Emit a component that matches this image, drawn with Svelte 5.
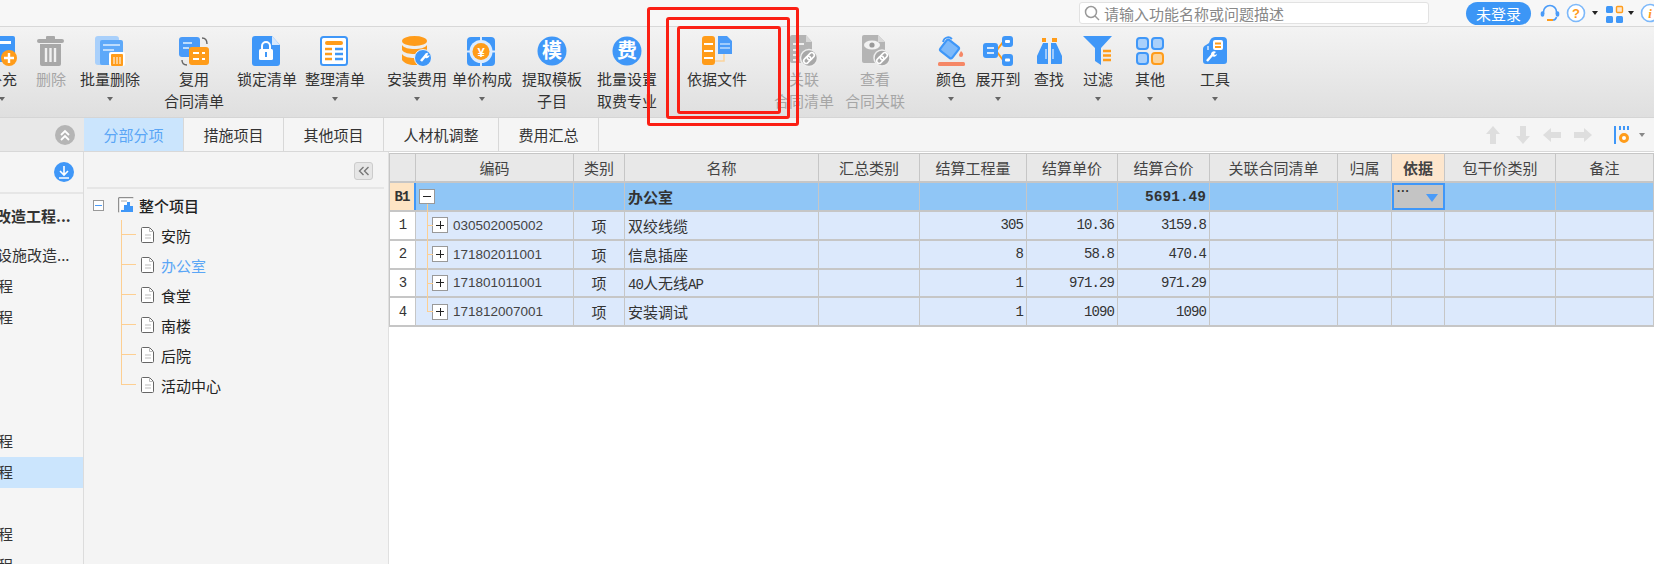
<script>
    const blue = '#3f97f8'

    const tools = [
        {w: 70, icon: 'add', lines: ['补充'], arrow: true},
        {w: 28, icon: 'trash', lines: ['删除'], off: true},
        {w: 90, icon: 'batchdel', lines: ['批量删除'], arrow: true},
        {w: 78, icon: 'reuse', lines: ['复用', '合同清单']},
        {w: 68, icon: 'lock', lines: ['锁定清单']},
        {w: 68, icon: 'sort', lines: ['整理清单'], arrow: true},
        {w: 96, icon: 'db', lines: ['安装费用'], arrow: true},
        {w: 34, icon: 'price', lines: ['单价构成'], arrow: true},
        {w: 106, icon: 'mo', lines: ['提取模板', '子目']},
        {w: 44, icon: 'fei', lines: ['批量设置', '取费专业']},
        {w: 136, icon: 'basis', lines: ['依据文件']},
        {w: 38, icon: 'link', lines: ['关联', '合同清单'], off: true},
        {w: 104, icon: 'view', lines: ['查看', '合同关联'], off: true},
        {w: 48, icon: 'color', lines: ['颜色'], arrow: true},
        {w: 46, icon: 'expand', lines: ['展开到'], arrow: true},
        {w: 56, icon: 'find', lines: ['查找']},
        {w: 42, icon: 'filter', lines: ['过滤'], arrow: true},
        {w: 62, icon: 'other', lines: ['其他'], arrow: true},
        {w: 68, icon: 'tool', lines: ['工具'], arrow: true}
    ]

    const tabs = ['分部分项', '措施项目', '其他项目', '人材机调整', '费用汇总']

    const sideRows = [
        {text: '改造工程...', kind: 'bold'},
        {text: '设施改造...', kind: 'mid'},
        {text: '程'}, {text: '程'},
        {text: ''}, {text: ''}, {text: ''},
        {text: '程'},
        {text: '程', sel: true},
        {text: ''},
        {text: '程'}, {text: '程'}
    ]

    const treeItems = ['安防', '办公室', '食堂', '南楼', '后院', '活动中心']

    const heads = ['', '编码', '类别', '名称', '汇总类别', '结算工程量', '结算单价', '结算合价', '关联合同清单', '归属', '依据', '包干价类别', '备注']

    const rows = [
        {n: 1, code: '030502005002', name: '双绞线缆', qty: '305', unit: '10.36', sum: '3159.8'},
        {n: 2, code: '171802011001', name: '信息插座', qty: '8', unit: '58.8', sum: '470.4'},
        {n: 3, code: '171801011001', name: '40人无线AP', qty: '1', unit: '971.29', sum: '971.29'},
        {n: 4, code: '171812007001', name: '安装调试', qty: '1', unit: '1090', sum: '1090'}
    ]
</script>

<div class="page">
    <header class="topbar">
        <div class="search">
            <svg width="16" height="16" viewBox="0 0 16 16" fill="none" stroke="#999" stroke-width="1.5"><circle cx="7" cy="7" r="5.5"/><path d="M11 11l4 4"/></svg>
            <span>请输入功能名称或问题描述</span>
        </div>
        <button class="login">未登录</button>
        <svg class="ti headset" width="20" height="20" viewBox="0 0 20 20" fill="none" stroke="#4a9bf8" stroke-width="1.600"><path d="M3.500 11V9a6.500 6.500 0 0 1 13 0v2"/><rect x="1.500" y="9" width="2" height="4" rx="1" fill="#4a9bf8"/><rect x="16.500" y="9" width="2" height="4" rx="1" fill="#4a9bf8"/><path d="M7 17h6" stroke="#ff9c1a" stroke-width="2"/><path d="M13 17c2 0 3-1 3.500-3"/></svg>
        <svg class="ti help" width="20" height="20" viewBox="0 0 20 20" fill="#fff" stroke="#7cb8fa" stroke-width="1.600"><circle cx="10" cy="10" r="8.500"/><text x="10" y="15" text-anchor="middle" font-size="13" font-weight="bold" fill="#ff9c1a" stroke="none" font-family="Liberation Sans">?</text></svg>
        <i class="mini help-c"></i>
        <svg class="ti apps" width="18" height="20" viewBox="0 0 18 20"><rect x="0" y="3" width="7" height="7" rx="1.500" fill={blue}/><rect x="10.500" y="3.500" width="6" height="6" rx="1" fill="#fde6cd" stroke="#ff9c1a" stroke-width="1.400"/><rect x="0" y="13" width="7" height="7" rx="1.500" fill={blue}/><rect x="10" y="13" width="7" height="7" rx="1.500" fill={blue}/></svg>
        <i class="mini apps-c"></i>
        <svg class="ti help" width="20" height="20" viewBox="0 0 20 20" fill="#fff" stroke="#7cb8fa" stroke-width="1.600"><circle cx="10" cy="10" r="8.500"/><text x="10" y="15" text-anchor="middle" font-size="13" font-weight="bold" font-style="italic" fill="#ff9c1a" stroke="none" font-family="Liberation Serif">i</text></svg>
    </header>

    <div class="toolbar">
        {#each tools as t}
            <div class="tool" class:off={t.off} style="width:{t.w}px">
                <svg class="ico" width="30" height="30" viewBox="0 0 30 30">
                    {#if t.icon === 'add'}
                        <rect x="0" y="0" width="28" height="26" rx="2" fill={blue}/><rect x="0" y="5" width="24" height="3" fill="#fff"/>
                        <circle cx="22" cy="22" r="8" fill="#ff9c1a"/><path d="M22 17v10M17 22h10" stroke="#fff" stroke-width="2.4"/>
                    {:else if t.icon === 'trash'}
                        <rect x="1" y="3" width="27" height="4" rx="2" fill="#a8a8a8"/><rect x="10" y="0" width="9" height="4" rx="1" fill="#a8a8a8"/>
                        <path d="M4 8h21v20a2 2 0 0 1-2 2H6a2 2 0 0 1-2-2z" fill="#a8a8a8"/>
                        <path d="M10 12v14M14.500 12v14M19 12v14" stroke="#f0f0f0" stroke-width="2.400"/>
                    {:else if t.icon === 'batchdel'}
                        <rect x="0" y="0" width="24" height="29" rx="3" fill="#a9d0fb"/><rect x="5" y="4" width="23" height="25" rx="2" fill="#5ea9f9"/>
                        <path d="M8 9h17M8 14h11" stroke="#bcdcfd" stroke-width="2"/>
                        <rect x="14" y="16" width="16" height="14" rx="2" fill="#fff"/><rect x="16" y="18" width="12" height="12" rx="1" fill="#ff9c1a"/><path d="M19 21v7M22 21v7M25 21v7" stroke="#fff"/>
                    {:else if t.icon === 'reuse'}
                        <rect x="0" y="1" width="21" height="20" rx="3" fill="#4a9bf8"/><path d="M4 7h9M4 12h6" stroke="#bcdcfd" stroke-width="2"/>
                        <rect x="10" y="11" width="20" height="18" rx="3" fill="#ff9c1a"/><path d="M14 17h6M23 17h3M14 23h6M23 23h3" stroke="#fff" stroke-width="2"/>
                        <path d="M23 2c3 0 5 2 5 6M3 24c0 3 2 5 5 5" stroke="#666" stroke-width="1.400" fill="none"/>
                    {:else if t.icon === 'lock'}
                        <path d="M3 0h17l8 9v18a3 3 0 0 1-3 3H3a3 3 0 0 1-3-3V3a3 3 0 0 1 3-3z" fill={blue}/><path d="M20 0l8 9h-8z" fill="#d6e8fd"/>
                        <rect x="7" y="13" width="14" height="11" rx="1.500" fill="#fff"/><path d="M10 13V10a4 4 0 0 1 8 0v3" fill="none" stroke="#fff" stroke-width="2"/><rect x="13" y="16" width="2" height="5" fill={blue}/>
                    {:else if t.icon === 'sort'}
                        <rect x="1" y="1" width="26" height="28" rx="2.500" fill="#fff" stroke={blue} stroke-width="2"/><rect x="5" y="5" width="18" height="4" rx="2" fill="#ff9c1a"/>
                        <path d="M5 13h7M5 18h7M5 23h7" stroke="#ff9c1a" stroke-width="2.400"/><path d="M15 13h8M15 18h8M15 23h8" stroke={blue} stroke-width="2.400"/>
                    {:else if t.icon === 'db'}
                        <ellipse cx="12.500" cy="5" rx="12.500" ry="5" fill="#ff9c1a"/>
                        <path d="M0 9c2 3 7 4 12.500 4S23 12 25 9v5c-2 3-7 4-12.500 4S2 17 0 14z" fill="#ff9c1a"/>
                        <path d="M0 18c2 3 7 4 12.500 4S23 21 25 18v6c-2 3-7 5-12.500 5S2 27 0 24z" fill="#ff9c1a"/>
                        <circle cx="21" cy="22" r="8.500" fill={blue} stroke="#f3f3f3"/><path d="M25 18l-6 7" stroke="#fff" stroke-width="2.600"/><path d="M22.500 20a3 3 0 0 1 4-3l-2 2 1 1 2-1a3 3 0 0 1-4 3z" fill="#fff"/>
                    {:else if t.icon === 'price'}
                        <rect x="0" y="1" width="28" height="29" rx="4" fill={blue}/><path d="M14 1v6M14 24v6M0 15.500h6M22 15.500h6" stroke="#dcecff" stroke-width="2"/>
                        <circle cx="14" cy="15.500" r="11.500" fill="#dcecff"/><circle cx="14" cy="15.500" r="8.500" fill="#ff9c1a"/><text x="14" y="20.500" text-anchor="middle" font-size="13" font-weight="bold" fill="#fff" font-family="Liberation Sans">¥</text>
                    {:else if t.icon === 'mo' || t.icon === 'fei'}
                        <circle cx="15" cy="15" r="14.500" fill={blue}/><text x="15" y="22" text-anchor="middle" font-size="20" font-weight="bold" fill="#fff" font-family="Noto Sans CJK SC">{t.icon === 'mo' ? '模' : '费'}</text>
                    {:else if t.icon === 'basis'}
                        <rect x="0" y="0" width="13" height="29" rx="3" fill="#ff9c1a"/><path d="M2 8h9M2 15h9M2 22h9" stroke="#fff" stroke-width="2"/>
                        <path d="M13 25h9v-7" stroke="#fbd49c" stroke-width="1.500" fill="none"/>
                        <path d="M16 0h9l5 5v13H16z" fill="#4a9bf8"/><path d="M18 8h10M18 12h10" stroke="#bcdcfd" stroke-width="1.500"/>
                    {:else if t.icon === 'link'}
                        <path d="M3 -1h14l6 7v21H3a2 2 0 0 1-2-2V1a2 2 0 0 1 2-2z" fill="#b4b4b4"/><path d="M17 -1l6 7h-6z" fill="#d8d8d8"/>
                        <path d="M4 8h11M4 14h3M4 19h3M4 24h3" stroke="#eee" stroke-width="2"/>
                        <circle cx="20" cy="22" r="8.500" fill="#a8a8a8" stroke="#eee" stroke-width="1.500"/>
                        <g transform="rotate(-45 20 22)" fill="none" stroke="#fff" stroke-width="1.600"><rect x="13.500" y="19.500" width="8" height="5" rx="2.500"/><rect x="18.500" y="19.500" width="8" height="5" rx="2.500"/></g>
                    {:else if t.icon === 'view'}
                        <path d="M4 -1h14l7 7v21H4a2 2 0 0 1-2-2V1a2 2 0 0 1 2-2z" fill="#b4b4b4"/><path d="M18 -1l7 7h-7z" fill="#d8d8d8"/>
                        <ellipse cx="12" cy="9" rx="8" ry="4.500" fill="#f2f2f2"/><circle cx="12" cy="9" r="2.600" fill="#999"/>
                        <circle cx="22" cy="22" r="8" fill="#a8a8a8" stroke="#eee" stroke-width="1.500"/>
                        <g transform="rotate(-45 22 22)" fill="none" stroke="#fff" stroke-width="1.600"><rect x="15.500" y="19.500" width="8" height="5" rx="2.500"/><rect x="20.500" y="19.500" width="8" height="5" rx="2.500"/></g>
                    {:else if t.icon === 'color'}
                        <path d="M7 6C8 1 13 0 16 3" fill="none" stroke={blue} stroke-width="1.800"/>
                        <rect x="6" y="6" width="15" height="14" rx="2" transform="rotate(38 13.500 13)" fill="#7db9fa" stroke={blue} stroke-width="2.200"/>
                        <path d="M25 15c2 2 2.500 3 2 4a2 2 0 0 1-4 0c0-1 1-2 2-4z" fill="#f58766"/><rect x="2" y="26" width="27" height="4" rx="1.500" fill="#f58766"/>
                    {:else if t.icon === 'expand'}
                        <path d="M14 14l6-8M14 16l6 8" stroke="#ff9c1a" stroke-width="2"/>
                        <rect x="0" y="7" width="15" height="15" rx="3" fill={blue}/><path d="M4 12h7M4 17h7" stroke="#d6e8fd" stroke-width="1.800"/>
                        <rect x="19" y="0" width="11" height="11" rx="3" fill={blue}/><rect x="22" y="4" width="5" height="3" rx="1" fill="#fff"/>
                        <rect x="19" y="18" width="11" height="12" rx="3" fill={blue}/><rect x="22" y="22.500" width="5" height="3" rx="1" fill="#fff"/>
                    {:else if t.icon === 'find'}
                        <path d="M9 7h5v21H4a1 1 0 0 1-1-1v-7z" fill={blue}/><path d="M17 7h5l6 13v7a1 1 0 0 1-1 1H17z" fill={blue}/>
                        <path d="M12 13v10M19 13v10" stroke="#dcecff" stroke-width="1.200"/>
                        <rect x="8" y="2" width="4" height="4" fill="#ff9c1a"/><rect x="18" y="2" width="5" height="4" fill="#ff9c1a"/>
                    {:else if t.icon === 'filter'}
                        <path d="M0 0h29L18 12v17l-6-4V12z" fill={blue}/><path d="M20 15h8M20 19.500h8M20 24h8" stroke="#ff9c1a" stroke-width="2.400"/>
                    {:else if t.icon === 'other'}
                        <rect x="2" y="2" width="11" height="11" rx="3" fill="#a9d0fb" stroke={blue} stroke-width="2"/><rect x="17" y="2" width="11" height="11" rx="3" fill="#a9d0fb" stroke={blue} stroke-width="2"/>
                        <rect x="2" y="17" width="11" height="11" rx="3" fill="#a9d0fb" stroke={blue} stroke-width="2"/><rect x="17" y="17" width="11" height="11" rx="3" fill="#fbd49c" stroke="#ff9c1a" stroke-width="2"/>
                    {:else if t.icon === 'tool'}
                        <path d="M15 1h8a4 4 0 0 1 4 4v20a3 3 0 0 1-3 3H6a3 3 0 0 1-3-3V13c0-2 1-3 3-4l3-2c1-4 3-6 6-6z" fill={blue}/>
                        <path d="M8 10v4" stroke="#fff" stroke-width="1.200"/>
                        <rect x="13" y="4" width="10" height="10" rx="2" fill="#fff"/><path d="M15 7.500h6M15 11h6" stroke="#ff9c1a" stroke-width="2"/>
                        <path d="M7 25l6-7" stroke="#fff" stroke-width="2.400"/><path d="M11 18a3 3 0 0 1 5-2l-2 2 1 1 2-1a3 3 0 0 1-5 2z" fill="#fff"/>
                    {/if}
                </svg>
                {#each t.lines as line}
                    <span class="label">{line}</span>
                {/each}
                {#if t.arrow}<i class="caret"></i>{/if}
            </div>
        {/each}
    </div>

    <div class="tabbar">
        <div class="side-head">
            <span class="round grey">
                <svg width="12" height="12" viewBox="0 0 12 12" fill="none" stroke="#fff" stroke-width="1.800"><path d="M2 6l4-4 4 4M2 11l4-4 4 4"/></svg>
            </span>
        </div>
        {#each tabs as tab, i}
            <div class="tab" class:active={i === 0} class:wide={i === 3}>{tab}</div>
        {/each}
        <div class="tab-tools">
            <svg width="16" height="20" viewBox="0 0 16 20" fill="#dedede"><path d="M8 1l7 8h-4v10H5V9H1z"/></svg>
            <svg class="down" width="16" height="20" viewBox="0 0 16 20" fill="#dedede"><path d="M8 19L1 11h4V1h6v10h4z"/></svg>
            <svg class="side-arrow" width="20" height="16" viewBox="0 0 20 16" fill="#dedede"><path d="M1 8l8-7v4h10v6H9v4z"/></svg>
            <svg class="side-arrow" width="20" height="16" viewBox="0 0 20 16" fill="#dedede"><path d="M19 8l-8-7v4H1v6h10v4z"/></svg>
            <svg class="gear" width="18" height="20" viewBox="0 0 18 20"><path d="M2 1v18" stroke={blue} stroke-width="2"/><path d="M7 1v4M11 1v4M15 1v4" stroke={blue} stroke-width="2"/><circle cx="11" cy="13" r="3.500" fill="#fff" stroke="#ff9c1a" stroke-width="3"/></svg>
            <i class="mini grey"></i>
        </div>
    </div>

    <div class="main">
        <aside class="side">
            <div class="side-top">
                <span class="round">
                    <svg width="14" height="14" viewBox="0 0 14 14" fill="none" stroke="#fff" stroke-width="1.600"><path d="M7 1v8M3 6l4 4 4-4M2 13h10"/></svg>
                </span>
            </div>
            <div class="side-list">
                {#each sideRows as r}
                    <div class="side-row {r.kind || ''}" class:sel={r.sel}><span>{r.text}</span></div>
                {/each}
            </div>
        </aside>

        <section class="tree">
            <div class="tree-top">
                <span class="collapse">
                    <svg width="12" height="10" viewBox="0 0 12 10" fill="none" stroke="#777" stroke-width="1.400"><path d="M5.500 1L1.500 5l4 4M10.500 1l-4 4 4 4"/></svg>
                </span>
            </div>
            <div class="tree-root">
                <i class="box minus"></i>
                <svg width="16" height="16" viewBox="0 0 16 16"><path d="M.7 15.300V.7h14.600" fill="#fff" stroke="#777"/><path d="M3 13h3V8h3V5l3 0v4h3v6H3z" fill={blue}/><path d="M3 4h6" stroke="#aaa"/></svg>
                <span>整个项目</span>
            </div>
            <ul class="tree-list">
                {#each treeItems as item, i}
                    <li class:current={i === 1}>
                        <svg width="14" height="16" viewBox="0 0 14 16" fill="#fff" stroke="#666"><path d="M1.500 .5h7l4 4v10a1 1 0 0 1-1 1h-10a1 1 0 0 1-1-1v-13a1 1 0 0 1 1-1z"/><path d="M8.500 .5v4h4M4 8h6M4 11h6" fill="none" stroke="#bbb"/></svg>
                        <span>{item}</span>
                    </li>
                {/each}
            </ul>
        </section>

        <section class="sheet">
            <div class="row head">
                {#each heads as h, i}
                    <div class="cell" class:hot={i === 10}>{h}</div>
                {/each}
            </div>
            <div class="row group">
                <div class="cell num b1">B1</div>
                <div class="cell code first"><i class="box minus white"></i></div>
                <div class="cell"></div>
                <div class="cell name">办公室</div>
                <div class="cell"></div>
                <div class="cell"></div>
                <div class="cell"></div>
                <div class="cell val">5691.49</div>
                <div class="cell"></div>
                <div class="cell"></div>
                <div class="cell picked"><span>···</span><i class="tri"></i></div>
                <div class="cell"></div>
                <div class="cell"></div>
            </div>
            {#each rows as r, i}
                <div class="row">
                    <div class="cell num">{r.n}</div>
                    <div class="cell code child" class:last={i === rows.length - 1}><i class="box plus"></i><span>{r.code}</span></div>
                    <div class="cell mid">项</div>
                    <div class="cell name">
                        <span>
                            {#each r.name.split(/([A-Za-z0-9]+)/) as part, j}
                                {#if j % 2}<span class="latin">{part}</span>{:else}{part}{/if}
                            {/each}
                        </span>
                    </div>
                    <div class="cell"></div>
                    <div class="cell val">{r.qty}</div>
                    <div class="cell val">{r.unit}</div>
                    <div class="cell val">{r.sum}</div>
                    <div class="cell"></div>
                    <div class="cell"></div>
                    <div class="cell"></div>
                    <div class="cell"></div>
                    <div class="cell"></div>
                </div>
            {/each}
        </section>
    </div>

    <!-- hand drawn annotation boxes on the screenshot -->
    <i class="mark outer"></i>
    <i class="mark middle"></i>
    <i class="mark inner"></i>
</div>

<style>
    :global(body) {
        margin: 0;
        background: #fff;
    }

    .page {
        position: relative;
        width: 1654px;
        height: 564px;
        overflow: hidden;
        display: grid;
        grid-template-rows: 27px 91px 34px 1fr;
        font-family: "Noto Sans CJK SC", "Liberation Sans", sans-serif;
        font-size: 15px;
        color: #333;
    }

    .topbar {
        display: flex;
        align-items: center;
        padding-left: 1079px;
        background: #f7f7f7;
        border-bottom: 1px solid #d8d8d8;
        box-sizing: border-box;
        height: 27px;
        white-space: nowrap;
    }

    .search {
        width: 350px;
        height: 22px;
        box-sizing: border-box;
        background: #fff;
        border: 1px solid #e2e2e2;
        border-radius: 3px;
        display: flex;
        align-items: center;
        gap: 4px;
        padding-left: 4px;
        color: #888;
        flex: none;
    }

    .login {
        margin-left: 37px;
        width: 65px;
        height: 23px;
        border: 0;
        padding: 0;
        border-radius: 12px;
        background: #3c96f6;
        color: #fff;
        font: inherit;
        flex: none;
    }

    .ti {
        flex: none;
        margin-left: 6px;
    }

    .ti.headset {
        margin-left: 9px;
    }

    .ti.apps {
        margin-left: 8px;
    }

    .mini {
        flex: none;
        border-left: 3px solid transparent;
        border-right: 3px solid transparent;
        border-top: 4px solid #222;
    }

    .mini.help-c {
        margin-left: 6px;
    }

    .mini.apps-c {
        margin-left: 4px;
    }

    .mini.grey {
        border-top-color: #888;
        margin-left: 4px;
    }

    .toolbar {
        display: flex;
        margin-left: -33px;
        padding-top: 9px;
        box-sizing: border-box;
        height: 91px;
        width: 1687px;
        background: linear-gradient(#f3f3f3, #dfdfdf);
        border-bottom: 1px solid #d5d5d5;
    }

    .tool {
        display: flex;
        flex-direction: column;
        align-items: center;
        flex: none;
    }

    .ico {
        flex: none;
        overflow: visible;
        margin-bottom: 2px;
    }

    .label {
        flex: none;
        line-height: 21.500px;
        white-space: nowrap;
    }

    .off .label {
        color: #a6a6a6;
    }

    .caret {
        flex: none;
        margin-top: 7.500px;
        border-left: 3.500px solid transparent;
        border-right: 3.500px solid transparent;
        border-top: 4px solid #666;
    }

    .tabbar {
        display: flex;
        background: #f5f5f5;
        border-bottom: 1px solid #d8d8d8;
        box-sizing: border-box;
        height: 34px;
    }

    .side-head {
        width: 84px;
        flex: none;
        box-sizing: border-box;
        background: #e8e8e8;
        display: flex;
        align-items: center;
        justify-content: flex-end;
        padding-right: 9px;
    }

    .round {
        width: 20px;
        height: 20px;
        border-radius: 50%;
        background: #3f97f8;
        display: flex;
        align-items: center;
        justify-content: center;
    }

    .round.grey {
        background: #b5b5b5;
    }

    .tab {
        width: 99px;
        flex: none;
        border-right: 1px solid #d8d8d8;
        display: flex;
        align-items: center;
        justify-content: center;
        white-space: nowrap;
    }

    .tab.wide {
        width: 114px;
    }

    .tab.active {
        background: #cbe5fd;
        color: #5aa6f6;
    }

    .tab-tools {
        flex: 1;
        display: flex;
        align-items: center;
        justify-content: flex-end;
        gap: 14px;
        padding-right: 15px;
    }

    .tab-tools .down {
        margin-right: -3px;
    }

    .tab-tools .side-arrow {
        margin-right: -3px;
    }

    .gear {
        margin-left: 9px;
    }

    .tab-tools .mini {
        margin-left: -6px;
    }

    .main {
        display: grid;
        grid-template-columns: 84px 305px 1fr;
        min-height: 0;
    }

    .side {
        background: #f5f5f5;
        border-right: 1px solid #dcdcdc;
        overflow: hidden;
    }

    .side-top {
        height: 42px;
        box-sizing: border-box;
        border-bottom: 2px solid #e6e6e6;
        display: flex;
        align-items: center;
        justify-content: flex-end;
        padding-right: 9px;
    }

    .side-row {
        height: 31px;
        line-height: 29px;
        white-space: nowrap;
        overflow: hidden;
    }

    .side-row span {
        display: block;
        margin-left: -2px;
    }

    .side-row.bold {
        height: 46px;
        line-height: 44px;
        font-weight: bold;
    }

    .side-row.bold span {
        margin-left: -4px;
    }

    .side-row.mid span {
        margin-left: -3px;
    }

    .side-row.sel {
        background: #cbe5fd;
    }

    .tree {
        background: #f4f4f4;
        border-right: 1px solid #e0e0e0;
        padding: 0 4px 0 3px;
        min-width: 0;
    }

    .tree-top {
        height: 37px;
        box-sizing: border-box;
        border-bottom: 2px solid #e6e6e6;
        display: flex;
        justify-content: flex-end;
        padding: 10px 11px 0 0;
    }

    .collapse {
        width: 19px;
        height: 18px;
        box-sizing: border-box;
        background: #e6e6e6;
        border: 1px solid #ccc;
        border-radius: 3px;
        display: flex;
        align-items: center;
        justify-content: center;
    }

    .tree-root {
        height: 30px;
        margin-top: 1px;
        display: flex;
        align-items: center;
        padding-left: 6px;
        font-weight: 500;
        color: #222;
    }

    .tree-root svg {
        margin: 0 5px 0 14px;
    }

    .box {
        position: relative;
        display: block;
        flex: none;
        box-sizing: border-box;
        width: 11px;
        height: 11px;
        background: #fff;
        border: 1px solid #999;
    }

    .box.minus::after,
    .box.plus::after {
        content: '';
        position: absolute;
        left: 1px;
        right: 1px;
        top: 50%;
        height: 1px;
        margin-top: -.5px;
        background: #4a9bf8;
    }

    .tree-list {
        list-style: none;
        margin: 0;
        padding: 0 0 0 54px;
    }

    .tree-list li {
        position: relative;
        height: 30px;
        display: flex;
        align-items: center;
        gap: 6px;
        color: #222;
    }

    .tree-list li::before {
        content: '';
        position: absolute;
        left: -20px;
        top: 0;
        width: 15px;
        height: 15px;
        box-sizing: border-box;
        border-left: 1px solid #fdcf92;
        border-bottom: 1px solid #fdcf92;
    }

    .tree-list li:not(:last-child)::after {
        content: '';
        position: absolute;
        left: -20px;
        top: 15px;
        bottom: 0;
        border-left: 1px solid #fdcf92;
    }

    .tree-list li.current {
        color: #5aa6f6;
    }

    .sheet {
        background: #fff;
        padding-top: 1px;
        min-width: 0;
    }

    .row {
        display: grid;
        grid-template-columns: 27px 158px 51px 194px 101px 107px 91px 92px 128px 54px 53px 111px 98px;
        height: 28.750px;
        box-sizing: border-box;
        border-bottom: 2px solid #c6c6c6;
        background: #dce9fc;
    }

    .row.head {
        height: 30px;
        background: #e8e8e8;
        border-top: 1px solid #c6c6c6;
    }

    .row.group {
        height: 29px;
        background: #90c6f6;
    }

    .cell {
        position: relative;
        box-sizing: border-box;
        border-right: 1px solid #c6c6c6;
        display: flex;
        align-items: center;
        justify-content: center;
        white-space: nowrap;
        min-width: 0;
    }

    .cell:first-child {
        border-left: 1px solid #c6c6c6;
    }

    .head .cell {
        color: #444;
    }

    .head .cell.hot {
        background: #fde6cd;
        font-weight: bold;
    }

    .num {
        background: #fff;
        font-family: "Liberation Mono", monospace;
        font-size: 14px;
        letter-spacing: -.9px;
    }

    .num.b1 {
        background: #fde4c4;
        font-weight: bold;
        border-right: 2px solid #3f97f8;
    }

    .code {
        justify-content: flex-start;
        font-family: "Liberation Sans", sans-serif;
        font-size: 13.500px;
        color: #444;
    }

    .code .box {
        width: 16px;
        height: 16px;
        border: 1px solid #999;
    }

    .code .box.minus {
        height: 15px;
        margin-left: 3px;
    }

    .box.minus.white::after,
    .code .box.plus::after {
        background: #222;
        left: 3px;
        right: 3px;
    }

    .code .box.plus::before {
        content: '';
        position: absolute;
        top: 3px;
        bottom: 3px;
        left: 50%;
        width: 1px;
        margin-left: -.5px;
        background: #222;
    }

    .code.first::after {
        content: '';
        position: absolute;
        left: 11px;
        top: 21px;
        bottom: -2px;
        border-left: 1px solid #fdcf92;
    }

    .code.child::after {
        content: '';
        position: absolute;
        left: 11px;
        top: 0;
        bottom: -2px;
        width: 5px;
        border-left: 1px solid #fdcf92;
        background: linear-gradient(#fdcf92, #fdcf92) 0 13px / 5px 1px no-repeat;
    }

    .code.child.last::after {
        bottom: 13px;
    }

    .code.child .box {
        margin-left: 16px;
        margin-right: 5px;
    }

    .mid {
        color: #333;
    }

    .name {
        justify-content: flex-start;
        padding-left: 3px;
    }

    .latin {
        font-family: "Liberation Mono", monospace;
        font-size: 14px;
        letter-spacing: -.9px;
    }

    .group .name {
        font-weight: bold;
    }

    .val {
        justify-content: flex-end;
        padding-right: 3px;
        font-family: "Liberation Mono", monospace;
        font-size: 14px;
        letter-spacing: -.9px;
    }

    .group .val {
        font-weight: bold;
        font-size: 14.500px;
        letter-spacing: 0;
    }

    .cell.picked {
        background: #c4c4c4;
        outline: 2px solid #3f97f8;
        outline-offset: -2px;
        justify-content: space-between;
        align-items: flex-start;
        padding: 3px 6px 0 3px;
        font-family: "Liberation Mono", monospace;
        font-weight: bold;
        font-size: 12px;
        letter-spacing: -3px;
        line-height: 12px;
    }

    .tri {
        margin-top: 8px;
        border-left: 6px solid transparent;
        border-right: 6px solid transparent;
        border-top: 8px solid #4a9bf8;
    }

    .mark {
        position: absolute;
        box-sizing: border-box;
        border: 3px solid #fb1f14;
        border-radius: 3px;
        pointer-events: none;
    }

    .mark.outer {
        left: 647px;
        top: 7px;
        width: 152px;
        height: 119px;
    }

    .mark.middle {
        left: 666px;
        top: 17px;
        width: 124px;
        height: 102px;
    }

    .mark.inner {
        left: 677px;
        top: 26px;
        width: 104px;
        height: 88px;
    }
</style>
